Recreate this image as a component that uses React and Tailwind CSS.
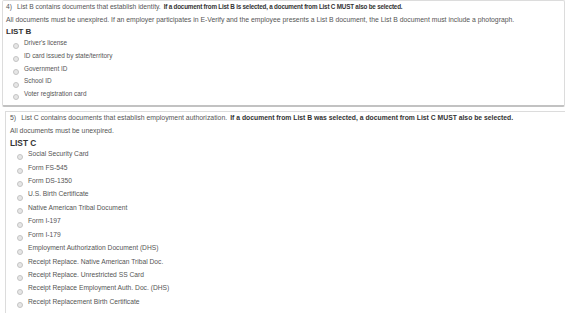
import React from "react";

const font = { fontFamily: '"Liberation Sans", Arial, sans-serif' };

function Radio({ label, h }) {
  return (
    <div className={`flex items-center ${h}`}>
      <span className="w-[6px] h-[6px] rounded-full border border-[#c4c4c4] bg-[#e6e6e6] translate-y-[3px] shrink-0" />
      <span className="ml-[5px] text-[#555]">{label}</span>
    </div>
  );
}

const listB = [
  "Driver's license",
  "ID card issued by state/territory",
  "Government ID",
  "School ID",
  "Voter registration card",
];

const listC = [
  "Social Security Card",
  "Form FS-545",
  "Form DS-1350",
  "U.S. Birth Certificate",
  "Native American Tribal Document",
  "Form I-197",
  "Form I-179",
  "Employment Authorization Document (DHS)",
  "Receipt Replace. Native American Tribal Doc.",
  "Receipt Replace. Unrestricted SS Card",
  "Receipt Replace Employment Auth. Doc. (DHS)",
  "Receipt Replacement Birth Certificate",
];

export default function App() {
  return (
    <div className="w-[578px] h-[328px] bg-white overflow-hidden leading-none" style={font}>
      <div className="ml-[2px] w-[563px] border border-[#dcdcdc] border-b-2 border-b-[#c2c2c2] rounded-[2px] pl-[3px] pb-[4px] text-[6.4px]">
        <div className="h-[13px] flex items-center text-[#555] whitespace-nowrap text-[6.7px]">
          <span>4)</span>
          <span className="ml-[5px]">List B contains documents that establish identity.</span>
          <span className="ml-[3px] font-bold text-[#333] text-[6.3px] tracking-[-0.2px]">If a document from List B is selected, a document from List C MUST also be selected.</span>
        </div>
        <div className="h-[13px] flex items-center text-[#555] whitespace-nowrap text-[6.85px]">
          All documents must be unexpired. If an employer participates in E-Verify and the employee presents a List B document, the List B document must include a photograph.
        </div>
        <div className="h-[10px] flex items-center font-bold text-[8px] text-[#333]">LIST B</div>
        <div className="pl-[7px] flex flex-col">
          {listB.map((l) => (
            <Radio key={l} label={l} h="h-[12.75px]" />
          ))}
        </div>
      </div>
      <div className="mt-[4px] ml-[5px] w-[560px] border-t border-l border-[#dcdcdc] pl-[4px] pb-[4px] text-[6.7px]">
        <div className="h-[13px] flex items-center text-[#555] whitespace-nowrap text-[6.9px]">
          <span>5)</span>
          <span className="ml-[5px]">List C contains documents that establish employment authorization.</span>
          <span className="ml-[3px] font-bold text-[#333] text-[6.8px]">If a document from List B was selected, a document from List C MUST also be selected.</span>
        </div>
        <div className="h-[13px] flex items-center text-[#555] text-[6.9px]">All documents must be unexpired.</div>
        <div className="h-[10px] flex items-center font-bold text-[8.3px] text-[#333]">LIST C</div>
        <div className="pl-[7px] flex flex-col">
          {listC.map((l) => (
            <Radio key={l} label={l} h="h-[13.45px]" />
          ))}
        </div>
      </div>
    </div>
  );
}
